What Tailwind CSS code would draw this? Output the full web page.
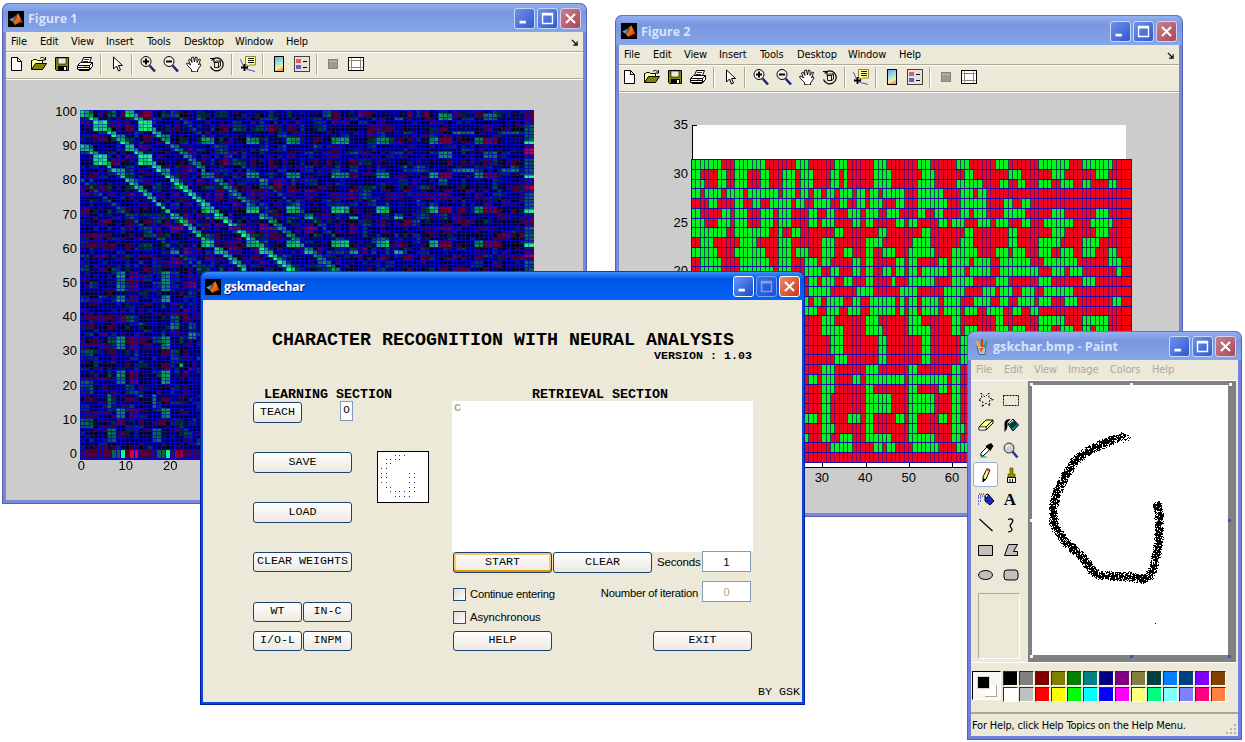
<!DOCTYPE html>
<html lang="en">
<head>
<meta charset="utf-8">
<title>gskmadechar</title>
<script src="https://cdn.jsdelivr.net/npm/@tailwindcss/browser@4"></script>
</head>
<body class="bg-white">
<svg class="absolute size-0">
  <defs>
    <linearGradient id="jet" x1="0" y1="0" x2="0.3" y2="1"><stop offset="0" stop-color="#6fa0e8"/><stop offset=".5" stop-color="#9be0e0"/><stop offset=".8" stop-color="#f4f0a0"/><stop offset="1" stop-color="#f0a060"/></linearGradient>
    <linearGradient id="flame" x1="0" y1="0" x2="1" y2="1"><stop offset="0" stop-color="#ffb060"/><stop offset=".5" stop-color="#f06a20"/><stop offset="1" stop-color="#a02808"/></linearGradient>
  </defs>
  <symbol id="matlab" viewBox="0 0 16 16"><rect width="16" height="16" fill="#000"/><path d="M1 8.5 6 6l2 2-3 3z" fill="#4fa0b0"/><path d="M6 6 10 2 8 9 5 11z" fill="#8a4a38"/><path d="M10 2c2 3 3 7 5 10l-2-1-3 1.5-3 1.5-2-3c3-1 4-5 5-9z" fill="url(#flame)"/></symbol>
  <symbol id="min" viewBox="0 0 21 21"><rect x="5" y="13" width="7" height="3" fill="#fff"/></symbol>
  <symbol id="max" viewBox="0 0 21 21"><path d="M5 5h11v11H5zM5 6.5h11" fill="none" stroke="#fff" stroke-width="1.6"/></symbol>
  <symbol id="cls" viewBox="0 0 21 21"><path d="m5.500 5.500 10 10m0-10-10 10" stroke="#fff" stroke-width="2.2"/></symbol>
</svg>

<main class="relative h-[742px] w-[1245px] overflow-hidden bg-white font-['DejaVu_Sans_Condensed','DejaVu_Sans',sans-serif] text-black">

<template id="figbar">
  <nav class="flex h-[19px] items-center pt-px pl-[5px] text-[11px] tracking-[-0.150px] whitespace-nowrap">
    <span class="w-[29px]">File</span><span class="w-[31px]">Edit</span><span class="w-[35px]">View</span><span class="w-[41px]">Insert</span><span class="w-[37px]">Tools</span><span class="w-[51px]">Desktop</span><span class="w-[51px]">Window</span><span>Help</span>
    <svg class="mr-[5px] ml-auto size-[7px]" viewBox="0 0 8 8"><path d="M1 1l5 5M7 2.500V7H2.500" fill="none" stroke="#000" stroke-width="1.300"/></svg>
  </nav>
  <div class="flex h-[29px] items-center border-t border-b border-t-[#aca899] border-b-white pb-[3px] shadow-[inset_0_1px_0_#fff,inset_0_-1px_0_#aca899]">
    <span class="-ml-[2px] flex w-[23px] justify-center"><svg class="size-4" viewBox="0 0 16 16"><path d="M3.500 1.500h6l4 4v9h-10zM9.500 1.500v4h4" fill="#fff" stroke="#000"/></svg></span>
    <span class="flex w-[23px] justify-center"><svg class="size-4" viewBox="0 0 16 16"><path d="M.5 13.500V4.500h1l1-1h3l1 1h5v3" fill="#ffff9c" stroke="#000"/><path d="M.5 13.500 4.500 7.500h11l-4 6z" fill="#848400" stroke="#000"/><path d="M9 2.500c2-2 4-1 5 1M14.500 1v3h-3" fill="none" stroke="#000"/></svg></span>
    <span class="flex w-[23px] justify-center"><svg class="size-4" viewBox="0 0 16 16"><path d="M1.500 1.500h13v13h-12l-1-1z" fill="#848400" stroke="#000"/><path d="M4 2h8v6H4z" fill="#ece9d8" stroke="#000" stroke-width=".6"/><path d="M4 10h9v5H4z"/><path d="M10 11h2v3h-2z" fill="#fff"/></svg></span>
    <span class="flex w-[23px] justify-center"><svg class="size-4" viewBox="0 0 16 16"><path d="m4.500 6.500 2-5h8l-2 5" fill="#fff" stroke="#000"/><path d="M7 3.500h5M6 5.500h5" stroke="#000" stroke-width=".8"/><path d="M.5 9.500l3-3h12v4l-3 3h-12z" fill="#fff" stroke="#000"/><path d="M1 9.500h11.500v4M12.500 9.500l3-3M1 11.500h11M2 14.500h10l2-2" fill="none" stroke="#000"/><path d="M7 10.500h3" stroke="#bdbd00"/></svg></span>
    <span class="flex w-[9px] justify-center"><i class="h-[21px] w-[2px] border-l border-[#aca899] bg-white"></i></span>
    <span class="flex w-[23px] justify-center"><svg class="size-4" viewBox="0 0 16 16"><path d="M4.500 1v12l3-3 2 5 2-1-2-4.500h4z" fill="#fff" stroke="#000"/></svg></span>
    <span class="flex w-[8px] justify-center"><i class="h-[21px] w-[2px] border-l border-[#aca899] bg-white"></i></span>
    <span class="flex w-[23px] justify-center"><svg class="size-4" viewBox="0 0 16 16"><path d="m9.500 9.500 5.500 6" stroke="#182878" stroke-width="2.500"/><circle cx="6" cy="5.500" r="5" fill="#f4f2ea" stroke="#000"/><path d="M3 5.500h6M6 2.500v6" stroke="#000" stroke-width="2"/></svg></span>
    <span class="flex w-[23px] justify-center"><svg class="size-4" viewBox="0 0 16 16"><path d="m9.500 9.500 5.500 6" stroke="#182878" stroke-width="2.500"/><circle cx="6" cy="5.500" r="5" fill="#f4f2ea" stroke="#000"/><path d="M3 5.500h6" stroke="#000" stroke-width="2"/></svg></span>
    <span class="flex w-[23px] justify-center"><svg class="size-4" viewBox="0 0 16 16"><path d="M5.500 15.500v-2l-4-4-1-2 1.500-.5 2.500 2-2-5 1.500-1 2 3.500L5.500 1.500 7.500 1l1 5 1-5 1.500.500v5l2-3.500 1.500.500-2 5.500 1.500-1.500 1 1.500-3.500 5v2z" fill="#fff" stroke="#000" stroke-width=".9"/></svg></span>
    <span class="flex w-[23px] justify-center"><svg class="size-4" viewBox="0 0 16 16"><path d="M2.500 4.500a6.500 6.500 0 1 1-1 6M1 2.500h4v4" fill="none" stroke="#000" stroke-width="1.200"/><path d="m5.500 6.500 2-1.500h4v5l-2 1.500h-4zM5.500 6.500h4v5m0-5 2-1.500" fill="#ece9d8" stroke="#000" stroke-width=".9"/></svg></span>
    <span class="flex w-[8px] justify-center"><i class="h-[21px] w-[2px] border-l border-[#aca899] bg-white"></i></span>
    <span class="flex w-[23px] justify-center"><svg class="size-4" viewBox="0 0 16 16"><path d="M0 3c2 2 2 5 4 8s7 3 11 4.500" fill="none" stroke="#4a4ac0"/><path d="M5.500.5h10v8.500h-6l-2 2v-2h-2z" fill="#ffff9c" stroke="#8c8430"/><path d="M8 2.500h6M8 4.500h6M8 6.500h6" stroke="#000" stroke-width=".9"/><path d="M1 11.500h7M4.500 8v7" stroke="#000" stroke-width="1.800"/></svg></span>
    <span class="flex w-[8px] justify-center"><i class="h-[21px] w-[2px] border-l border-[#aca899] bg-white"></i></span>
    <span class="flex w-[23px] justify-center"><svg class="size-4" viewBox="0 0 16 16"><rect x="3.500" y=".5" width="9" height="15" fill="url(#jet)" stroke="#000"/></svg></span>
    <span class="flex w-[23px] justify-center"><svg class="size-4" viewBox="0 0 16 16"><rect x=".5" y=".5" width="15" height="15" fill="#e4e0dc" stroke="#484038"/><path d="M2 3h5v4H2z" fill="#d86060"/><path d="M2 9h5v4H2z" fill="#6060c8"/><path d="M9 5.500h4M9 11.500h4" stroke="#000"/></svg></span>
    <span class="flex w-[8px] justify-center"><i class="h-[21px] w-[2px] border-l border-[#aca899] bg-white"></i></span>
    <span class="flex w-[23px] justify-center"><svg class="size-4" viewBox="0 0 16 16"><rect x="3.500" y="3.500" width="9" height="9" fill="#9c9a94" stroke="#87857c"/><path d="M4 5.500h8" stroke="#b8b6ae"/></svg></span>
    <span class="flex w-[23px] justify-center"><svg class="size-4" viewBox="0 0 16 16"><rect x=".5" y="1.500" width="15" height="13" fill="#fff" stroke="#000"/><path d="M1 4.500h14M1 11.500h14M3.500 2v12M12.500 2v12" stroke="#b0ada0"/><rect x="3.500" y="4.500" width="9" height="7" fill="#fff" stroke="#807c70"/></svg></span>
  </div>
</template>

<!-- Figure 1 -->
<section class="absolute top-[3px] left-[2px] flex h-[501px] w-[585px] flex-col rounded-t-[7px] border-r border-b border-l border-[#5560b8] bg-[#7887d8] px-[3px] pb-[3px]">
  <header class="-mx-[3px] flex h-[29px] shrink-0 items-center rounded-t-[7px] border-t border-[#5f74cc] bg-linear-to-b from-[#93b1f0] via-[#7a96df] via-30% to-[#84a6ea] pt-px pr-[5px] pl-[5px]">
    <svg class="size-4"><use href="#matlab"/></svg>
    <h1 class="mt-[2px] ml-1 font-['Open_Sans',sans-serif] text-[12.500px] font-bold text-[#d8e4f8]">Figure 1</h1>
    <div class="ml-auto flex gap-[2px]">
      <svg class="size-[21px] rounded-[3px] border border-[#c8d8f8] bg-linear-to-br from-[#7090e8] to-[#3058d0]"><use href="#min"/></svg>
      <svg class="size-[21px] rounded-[3px] border border-[#c8d8f8] bg-linear-to-br from-[#7090e8] to-[#3058d0]"><use href="#max"/></svg>
      <svg class="size-[21px] rounded-[3px] border border-[#d8d0e8] bg-linear-to-br from-[#c88090] to-[#a84858]"><use href="#cls"/></svg>
    </div>
  </header>
  <div data-bar class="shrink-0 bg-[#ece9d8]"></div>
  <div class="flex-1 bg-[#ccc] pt-[15px] font-['Liberation_Sans',sans-serif] text-[13px]">
    <div class="flex">
      <ul class="w-[71px] text-right leading-[34.200px]">
        <li>100</li><li>90</li><li>80</li><li>70</li><li>60</li><li>50</li><li>40</li><li>30</li><li>20</li><li>10</li><li>0</li>
      </ul>
      <canvas id="weights" width="454" height="350" class="mt-[15px] ml-[3px] h-[350px] w-[454px]"></canvas>
    </div>
    <ul class="-mt-[12px] ml-[53px] flex text-center leading-[14px]">
      <li class="w-[44.500px]">0</li><li class="w-[44.500px]">10</li><li class="w-[44.500px]">20</li><li class="w-[44.500px]">30</li>
    </ul>
  </div>
</section>

<!-- Figure 2 -->
<section class="absolute top-[15px] left-[615px] flex h-[502px] w-[568px] flex-col rounded-t-[7px] border-r border-b border-l border-[#5560b8] bg-[#7887d8] px-[3px] pb-[3px]">
  <header class="-mx-[3px] flex h-[30px] shrink-0 items-center rounded-t-[7px] border-t border-[#5f74cc] bg-linear-to-b from-[#93b1f0] via-[#7a96df] via-30% to-[#84a6ea] pt-px pr-[5px] pl-[5px]">
    <svg class="size-4"><use href="#matlab"/></svg>
    <h1 class="mt-[2px] ml-1 font-['Open_Sans',sans-serif] text-[12.500px] font-bold text-[#d8e4f8]">Figure 2</h1>
    <div class="ml-auto flex gap-[2px]">
      <svg class="size-[21px] rounded-[3px] border border-[#c8d8f8] bg-linear-to-br from-[#7090e8] to-[#3058d0]"><use href="#min"/></svg>
      <svg class="size-[21px] rounded-[3px] border border-[#c8d8f8] bg-linear-to-br from-[#7090e8] to-[#3058d0]"><use href="#max"/></svg>
      <svg class="size-[21px] rounded-[3px] border border-[#d8d0e8] bg-linear-to-br from-[#c88090] to-[#a84858]"><use href="#cls"/></svg>
    </div>
  </header>
  <div data-bar class="shrink-0 bg-[#ece9d8]"></div>
  <div class="flex-1 bg-[#ccc] pt-[8px] font-['Liberation_Sans',sans-serif] text-[13px]">
    <div class="flex">
      <ul class="w-[69px] text-right leading-[48.800px]">
        <li>35</li><li>30</li><li>25</li><li>20</li><li>15</li><li>10</li><li>5</li>
      </ul>
      <canvas id="patterns" width="442" height="344" class="mt-[24px] ml-[3px] h-[344px] w-[442px]"></canvas>
    </div>
    <ul class="mt-[2px] ml-[51px] flex text-center leading-[14px]">
      <li class="w-[43.400px]">0</li><li class="w-[43.400px]">10</li><li class="w-[43.400px]">20</li><li class="w-[43.400px]">30</li><li class="w-[43.400px]">40</li><li class="w-[43.400px]">50</li><li class="w-[43.400px]">60</li><li class="w-[43.400px]">70</li>
    </ul>
  </div>
</section>

<!-- gskmadechar -->
<section class="absolute top-[271px] left-[200px] flex h-[434px] w-[605px] flex-col rounded-t-[7px] border-r border-b border-l border-[#001ea0] bg-[#0a48e0] px-[2px] pb-[2px]">
  <header class="-mx-[2px] flex h-[29px] shrink-0 items-center rounded-t-[7px] border-t border-[#0a40b8] bg-linear-to-b from-[#3a90ff] via-[#0054e3] via-25% to-[#0364fc] pt-px pr-[4px] pl-[4px]">
    <svg class="size-4"><use href="#matlab"/></svg>
    <h1 class="mt-[2px] ml-[3px] font-['Open_Sans',sans-serif] text-[12.500px] font-bold tracking-[-0.300px] text-white [text-shadow:1px_1px_0_#0a1883]">gskmadechar</h1>
    <div class="ml-auto flex gap-[2px]">
      <svg class="size-[21px] rounded-[3px] border border-white bg-linear-to-br from-[#6a98f8] to-[#1848c8]"><use href="#min"/></svg>
      <svg class="size-[21px] rounded-[3px] border border-[#7aa0f0] bg-linear-to-br from-[#3c70e8] to-[#1c50d0]"><use href="#max" opacity=".4"/></svg>
      <svg class="size-[21px] rounded-[3px] border border-white bg-linear-to-br from-[#f08868] to-[#c83410]"><use href="#cls"/></svg>
    </div>
  </header>
  <div class="flex flex-1 flex-col bg-[#ece9d8] font-['Liberation_Mono',monospace]">
    <h2 class="mt-[31px] ml-[69px] text-[18.330px] leading-[20px] font-bold whitespace-nowrap">CHARACTER RECOGNITION WITH NEURAL ANALYSIS</h2>
    <p class="mr-[50px] -mt-px text-right text-[11.670px] leading-[12px] font-bold">VERSION : 1.03</p>
    <div class="mt-[25px] flex">
      <div class="ml-[50px] flex w-[199px] flex-col text-[11.670px]">
        <h3 class="ml-[11px] h-[14px] text-[13.330px] leading-[16px] font-bold">LEARNING SECTION</h3>
        <div class="flex h-[51px] items-start">
          <button class="mt-px h-[21px] w-[49px] rounded-[3px] border border-[#1c4070] bg-linear-to-b from-white to-[#ece9e0]">TEACH</button>
          <span class="ml-[38px] h-[20px] w-[13px] border border-[#7f9db9] bg-white text-center text-[11px] leading-[17px]">O</span>
        </div>
        <div class="flex gap-[25px]">
          <div class="flex flex-col">
            <button class="mb-[29px] h-[21px] w-[99px] rounded-[3px] border border-[#1c4070] bg-linear-to-b from-white to-[#ece9e0]">SAVE</button>
            <button class="mb-[29px] h-[21px] w-[99px] rounded-[3px] border border-[#1c4070] bg-linear-to-b from-white to-[#ece9e0]">LOAD</button>
            <button class="h-[20px] w-[99px] rounded-[3px] border border-[#1c4070] bg-linear-to-b from-white to-[#ece9e0] whitespace-nowrap">CLEAR WEIGHTS</button>
          </div>
          <svg id="thumb" class="-mt-px size-[52px] border border-black bg-white" viewBox="0 0 50 50" shape-rendering="crispEdges"></svg>
        </div>
        <div class="mt-[30px] grid w-[99px] grid-cols-2 gap-x-px gap-y-[9px]">
          <button class="h-[20px] rounded-[3px] border border-[#1c4070] bg-linear-to-b from-white to-[#ece9e0]">WT</button>
          <button class="h-[20px] rounded-[3px] border border-[#1c4070] bg-linear-to-b from-white to-[#ece9e0]">IN-C</button>
          <button class="h-[20px] rounded-[3px] border border-[#1c4070] bg-linear-to-b from-white to-[#ece9e0]">I/O-L</button>
          <button class="h-[20px] rounded-[3px] border border-[#1c4070] bg-linear-to-b from-white to-[#ece9e0]">INPM</button>
        </div>
      </div>
      <div class="flex w-[301px] flex-col text-[11.670px]">
        <h3 class="ml-[80px] h-[14px] text-[13.330px] leading-[16px] font-bold">RETRIEVAL SECTION</h3>
        <div class="h-[151px] bg-white pl-[2px] text-[11.670px] leading-[14px] font-bold text-[#aca899]">C</div>
        <div class="flex pl-px">
          <button class="h-[21px] w-[99px] rounded-[3px] border border-[#1c4070] bg-linear-to-b from-white to-[#ece9e0] shadow-[inset_0_-2px_0_#e59700,inset_0_0_0_2px_#f8c870]">START</button>
          <button class="ml-px h-[21px] w-[99px] rounded-[3px] border border-[#1c4070] bg-linear-to-b from-white to-[#ece9e0]">CLEAR</button>
          <span class="w-[50px] pl-[5px] font-['Liberation_Sans',sans-serif] text-[11.500px] leading-[21px] tracking-[-0.150px]">Seconds</span>
          <span class="-mt-px h-[21px] w-[49px] border border-[#7f9db9] bg-white text-center font-['Liberation_Sans',sans-serif] text-[11.500px] leading-[20px]">1</span>
        </div>
        <div class="mt-[8px] flex justify-between pr-[2px] pl-px font-['Liberation_Sans',sans-serif] text-[11.250px] tracking-[-0.240px]">
          <div class="mt-[7px] flex flex-col gap-[10px]">
            <label class="flex h-[13px] items-center gap-1 leading-[13px]"><i class="size-[13px] border border-[#1c5180] bg-linear-to-br from-[#dcdcd7] to-white"></i>Continue entering</label>
            <label class="flex h-[13px] items-center gap-1 leading-[13px] tracking-[-0.050px]"><i class="size-[13px] border border-[#1c5180] bg-linear-to-br from-[#dcdcd7] to-white"></i>Asynchronous</label>
          </div>
          <div class="flex gap-[4px]">
            <span class="leading-[24px]">Noumber of iteration</span>
            <span class="h-[21px] w-[49px] border border-[#7f9db9] bg-white text-center leading-[20px] text-[#aca899]">0</span>
          </div>
        </div>
        <div class="mt-[7px] flex justify-between pr-px pl-px">
          <button class="h-[20px] w-[99px] rounded-[3px] border border-[#1c4070] bg-linear-to-b from-white to-[#ece9e0]">HELP</button>
          <button class="h-[20px] w-[99px] rounded-[3px] border border-[#1c4070] bg-linear-to-b from-white to-[#ece9e0]">EXIT</button>
        </div>
      </div>
    </div>
    <p class="mt-auto mr-[2px] mb-[3px] text-right text-[11.670px] leading-[14px]">BY GSK</p>
  </div>
</section>

<!-- Paint -->
<section class="absolute top-[331px] left-[967px] flex h-[409px] w-[275px] flex-col rounded-t-[7px] border-r border-b border-l border-[#5560b8] bg-[#7080dc] px-[3px] pb-[3px]">
  <header class="-mx-[3px] flex h-[29px] shrink-0 items-center rounded-t-[7px] border-t border-[#5f74cc] bg-linear-to-b from-[#93b1f0] via-[#7a96df] via-30% to-[#84a6ea] pt-px pr-[5px] pl-[5px]">
    <svg class="size-4" viewBox="0 0 16 16"><path d="M4 7h9l-1 8.500H6z" fill="#b8c8d8" stroke="#506090"/><path d="M5 8 2 1l3 1 3 6z" fill="#f0b030"/><path d="M8 8 8 0h2v8z" fill="#d83820"/><path d="m10 8 3-6 2 1-3 6z" fill="#30a048"/><path d="m6 9 2 5 3-5" fill="#d86830"/></svg>
    <h1 class="mt-[2px] ml-1 font-['Open_Sans',sans-serif] text-[12.500px] font-bold tracking-[0.050px] whitespace-nowrap text-[#d8e4f8]">gskchar.bmp - Paint</h1>
    <div class="ml-auto flex gap-[2px]">
      <svg class="size-[21px] rounded-[3px] border border-[#c8d8f8] bg-linear-to-br from-[#7090e8] to-[#3058d0]"><use href="#min"/></svg>
      <svg class="size-[21px] rounded-[3px] border border-[#c8d8f8] bg-linear-to-br from-[#7090e8] to-[#3058d0]"><use href="#max"/></svg>
      <svg class="size-[21px] rounded-[3px] border border-[#d8d0e8] bg-linear-to-br from-[#c88090] to-[#a84858]"><use href="#cls"/></svg>
    </div>
  </header>
  <nav class="flex h-[20px] shrink-0 items-center bg-[#ece9d8] pl-[5px] text-[11px] tracking-[-0.100px] text-[#aca899]">
    <span class="w-[28px]">File</span><span class="w-[30px]">Edit</span><span class="w-[34px]">View</span><span class="w-[42px]">Image</span><span class="w-[42px]">Colors</span><span>Help</span>
  </nav>
  <div class="flex h-[282px] shrink-0 border-t border-white bg-[#ece9d8]">
    <div class="flex w-[57px] flex-col pt-[6px] pl-[3px]">
      <div class="-ml-px grid w-[50px] grid-cols-2 [&>span]:flex [&>span]:h-[25px] [&>span]:items-center [&>span]:justify-center">
        <span><svg class="size-4" viewBox="0 0 16 16"><path d="m3 1 4 4 4-4v5l4.500 1.500L11 9l1 5-4-3-4 4 1-5-4.500-2L4 6z" fill="none" stroke="#000" stroke-dasharray="2 1.500"/></svg></span>
        <span><svg class="size-4" viewBox="0 0 16 16"><path d="M.5 3.500h15v10H.5z" fill="none" stroke="#000" stroke-dasharray="2 1"/></svg></span>
        <span><svg class="size-4" viewBox="0 0 16 16"><path d="M1 10 8 3h7v3l-7 7H1z" fill="#ffff80" stroke="#000"/><path d="M1 10h7l7-7M8 10v3" fill="none" stroke="#000"/><path d="M1.500 10.500h6v2h-6z" fill="#fff"/></svg></span>
        <span><svg class="size-4" viewBox="0 0 16 16"><path d="m5 7 5-5 5.500 6L10 14z" fill="#0a8f8f" stroke="#000"/><path d="m6 7 6-2.500 2 3-5 4z" fill="#003838"/><path d="m6 6.500 4-3.500" stroke="#fff"/><path d="M1.500 15V7c0-4 3-5 6-5L4.500 5.500V9c0 2-2 5-3 6z" fill="#000"/></svg></span>
        <span><svg class="size-4" viewBox="0 0 16 16"><path d="M1 15.500h9l-4-2z" fill="#00c8c8"/><path d="m9 5-6 6v3h2l6.500-6z" fill="#fff" stroke="#000"/><path d="m7.500 4 5 5 1-2 2-3-2.500-3-3 1.500z"/></svg></span>
        <span><svg class="size-4" viewBox="0 0 16 16"><path d="m9.500 9.500 5 6" stroke="#2038a0" stroke-width="2.500"/><circle cx="6" cy="6" r="5" fill="#d0d0d0" stroke="#303030"/><path d="M3 5.500C4 3.500 6 3.500 7 3.500" fill="none" stroke="#fff"/></svg></span>
        <span class="rounded-[3px] border border-[#98b0d8] bg-white"><svg class="size-4" viewBox="0 0 16 16"><path d="m5 10 4-8.500 3 1.500-4 9-3 3z" fill="#ffff80" stroke="#000"/><path d="m9 1 3 1.500-1 2L8 3z" fill="#d05050"/><path d="m5 11 0 4 3-2.500z"/></svg></span>
        <span><svg class="size-4" viewBox="0 0 16 16"><path d="M7 1h3v6h2v3H5V7h2z" fill="#9a9200" stroke="#504c00" stroke-width=".7"/><path d="M4.500 10.500h8v5h-8z" fill="#fff" stroke="#000"/><path d="M7 12v3M9.500 12v3" stroke="#000"/></svg></span>
        <span><svg class="size-4" viewBox="0 0 16 16"><path d="m7 4 3-2 6 7-4 4-5-4z" fill="#1828b0" stroke="#000040"/><path d="M7 3.500 9.500 2l1 2-2.500 2z" fill="#fff" stroke="#000"/><path d="M1 2h5M0 4h6M0 6h4M0 9h3M0 12h2" stroke="#3840c8" stroke-width="1.500" stroke-dasharray="1 1"/></svg></span>
        <span class="pr-px font-['Liberation_Serif',serif] text-[17px] leading-none font-bold">A</span>
        <span><svg class="size-4" viewBox="0 0 16 16"><path d="m1.500 2 13 12" stroke="#000" stroke-width="1.200"/></svg></span>
        <span><svg class="size-4" viewBox="0 0 16 16"><path d="M5 2.500c5-2 6 1.500 3 4.500s2 4 1 6-3 2-4 2" fill="none" stroke="#000" stroke-width="1.200"/></svg></span>
        <span><svg class="size-4" viewBox="0 0 16 16"><path d="M.5 3.500h14v10H.5z" fill="#c0c0c0" stroke="#000"/></svg></span>
        <span><svg class="size-4" viewBox="0 0 16 16"><path d="M5.500 2.500h9l-4 7h4v4H1.500z" fill="#c0c0c0" stroke="#000"/></svg></span>
        <span><svg class="size-4" viewBox="0 0 16 16"><ellipse cx="7.500" cy="8" rx="7" ry="4.500" fill="#c0c0c0" stroke="#000"/></svg></span>
        <span><svg class="size-4" viewBox="0 0 16 16"><rect x="1" y="3" width="14" height="10" rx="3" fill="#c0c0c0" stroke="#000"/></svg></span>
      </div>
      <div class="mt-[6px] ml-[4px] h-[66px] w-[42px] border border-t-[#aca899] border-r-white border-b-white border-l-[#aca899]"></div>
    </div>
    <div class="relative flex-1 bg-[#808080] pt-[4px] pl-[4px]">
      <canvas id="drawing" width="196" height="270" class="h-[270px] w-[196px] bg-white"></canvas>
      <i class="absolute top-[2px] left-[2px] size-[3px] bg-white"></i>
      <i class="absolute top-[2px] left-[102px] size-[3px] bg-white"></i>
      <i class="absolute top-[2px] left-[201px] size-[3px] bg-white"></i>
      <i class="absolute top-[138px] left-[2px] size-[3px] bg-white"></i>
      <i class="absolute top-[274px] left-[2px] size-[3px] bg-white"></i>
      <i class="absolute top-[138px] left-[200px] size-[3px] bg-[#3858a8]"></i>
      <i class="absolute top-[274px] left-[102px] size-[3px] bg-[#3858a8]"></i>
      <i class="absolute top-[274px] left-[200px] size-[3px] bg-[#3858a8]"></i>
    </div>
    <div class="w-[2px]"></div>
  </div>
  <div class="flex h-[50px] shrink-0 gap-[2px] border-t border-white bg-[#ece9d8] pt-[8px] pl-px">
    <div class="grid size-[29px] border border-t-black border-r-white border-b-white border-l-black bg-[#f8f7f2]">
      <i class="col-start-1 row-start-1 mt-[13px] ml-[12px] size-[12px] border-r border-b border-[#aca899] bg-white"></i>
      <i class="col-start-1 row-start-1 mt-[4px] ml-[4px] size-[13px] border border-[#d8d5c8] bg-black"></i>
    </div>
    <div id="palette" class="grid h-[32px] grid-cols-[repeat(14,16px)] grid-rows-2"></div>
  </div>
  <footer class="flex h-[24px] flex-1 items-center border-t-2 border-[#aca899] bg-[#ece9d8] pt-[3px] pl-px text-[11px] tracking-[-0.190px] whitespace-nowrap">For Help, click Help Topics on the Help Menu.
    <svg class="mt-auto ml-auto size-[13px] shrink-0" viewBox="0 0 13 13" fill="#b8b4a2"><path d="M9 1h2v2H9zM9 5h2v2H9zM9 9h2v2H9zM5 5h2v2H5zM5 9h2v2H5zM1 9h2v2H1z"/></svg>
  </footer>
</section>
</main>

<script>
document.querySelectorAll('[data-bar]').forEach(b => b.append(document.getElementById('figbar').content.cloneNode(true)));

let seed = 7;
const rnd = () => (seed = (seed * 1664525 + 1013904223) >>> 0) / 4294967296;

// Set pixels of each stored pattern, as inclusive column ranges; one string per pattern, top row first.
const runs = [
'0-6 10-16 24-26 33-35 42-44 52-54 61-63 70-72 80-86 90-96',
'0-1 6-7 10-12 16-17 21-23 25-27 32-33 35 42-45 53-55 63-64 73-75 83-85 93-95',
'0-2 6-7 10-12 16-17 21-23 25-27 32-33 35 42-45 52-55 61-66 71-72 75-76 80-82 85-87 90-91 96-97',
'0-1 3-6 8-11 13-19 21-23 25-26 28-29 31-32 34-36 38-39 41-42 44-48 52-57 62-64 66-67',
'4-5 10-11 14-15 18-22 24-25 28-31 34-35 38-39 41-43 47-48 52-58 62-67 72-73 76-77',
'0-1 7-8 10-12 16-18 20-22 27-28 31-32 36-38 40-42 45-47 52-53 56-57 62-63 65-67 72-76 83-85 93-95',
'0-2 6-8 10-12 16-18 20-22 27-28 30-32 37-38 40-41 47-48 50-51 57-58 60-62 66-68 70-72 76-77 81-87 92-96',
'0-7 10-17 20 23-24 33-34 43-44 53-54 63-64 73-74 83-85 93-95',
'2-4 11-14 20-22 30-32 40-43 51-54 62-64 73-74 80-84 90-93',
'0-5 10-16 20-22 24-26 30-32 35-36 40-41 44-46 50-55 60-65 70-72 74-76 80-82 85-87 90-92 96-97',
'2-6 11-17 20-22 26-28 30-31 37-38 40-41 47-48 50-51 57-58 60-63 65-68 71-77 81-88 96-98',
'2-6 11-18 20-22 26-29 32-33 37-38 40-41 44-45 47-48 50-51 53-58 60-62 64-68 71-79 83-85 87-89 98',
'0-5 10-16 20-22 27-28 30-32 35-36 40-41 46 50-55 60-64 70-72 80-82 90-92',
'3-6 11-15 20-22 27-31 38-41 48-51 58-62 67-69 71-73 76-78 81-87',
'0-2 6-8 10-12 16-18 26 28-29 31-34 37-38 41-46 48 50-51 53-56 58-61 65-68 71-72 75-78 80-82 86-88 97-98',
'0-2 7-8 10-12 26-28 31-33 36-38 41-46 48 50-51 53-56 58-61 63-65 68-71 74-75 78-79',
'0-2 10-12 20-22 30-32 40-42 50-52 60-61 70-71 80-85 90-95',
'0-6 10-12 16-18 20-22 30-34 40-43 50-54 60-61 63-65 70-72 74-76 80-82 85-87 90-91 93-95',
'3-5 13-15 23-24 32-34 43-44 53-54 62-64 73-74 83-84 93-95',
'3-5 13-15 23-24 32-34 43-44 53-54 62-64 73-74 83-84 93-95',
'3-5 13-15 24-25 33-35 43-44 53-54 62-64 73-74 83-84',
'0-2 10-12 20-22 30-32 40-42 50-51 60-61 70-71 80-82 90-91',
'0-1 7-8 10-11 17-18 20-21 27-28 30-32 37-38 40-48 50-58 60-61 67-68 70-71 77-78 80-81 87-88',
'3-7 12-17 21-22 30-32 40-41 50-51 57-58 60-61 67-68 72-77 83-86',
'0-7 10-17 20-21 30-31 40-45 50-55 60-61 70-71 80-81 90-91',
'0-7 10-17 20-21 30-31 40-45 50-55 60-61 70-71 80-87 90-97',
'0-5 10-16 20-21 26-28 30-31 36-38 40-41 47-48 50-51 57-58 60-61 66-68 70-76 80-85',
'3-6 11-17 20-22 30-32 40-41 50-51 60-62 71-77 83-86',
'0-6 10-17 20-21 26 30-31 34-36 40-45 50-55 60-61 70-76 80-86',
'3-5 12-15 22-24 32-36 42-43 45-46 51-56 61-63 70-71 77-78',
''
];
const P = runs.map(s => { const a = new Array(102).fill(0); for (const r of s.split(' ')) if (r) { const [x, y = x] = r.split('-').map(Number); for (let i = x; i <= y; i++) a[i] = 1; } return a; });

// Pattern matrix
{
  const c = document.getElementById('patterns').getContext('2d'), cw = 4.34, rh = 9.77;
  c.fillStyle = '#fff'; c.fillRect(1, 0, 434, 343);
  c.fillStyle = '#000'; c.fillRect(1, 0, 1, 343); c.fillRect(1, 0, 5, 1); c.fillRect(1, 342, 434, 1);
  for (let i = 0; i <= 10; i++) c.fillRect(Math.round(1 + i * 43.4), 338, 1, 4);
  const X = i => i >= 101 ? 440 : Math.round(i * cw), Y = i => Math.round(34 + i * rh);
  P.forEach((row, r) => { for (let k = 0; k < 101; k++) {
    c.fillStyle = row[k] ? '#04f420' : (k > 98 ? '#fa0006' : '#f0041c');
    c.fillRect(X(k), Y(r), X(k + 1) - X(k), Y(r + 1) - Y(r));
  } });
  for (let k = 0; k < 100; k++) for (let r = 0; r < 31; r++) { c.fillStyle = P[r][k] || (k && P[r][k - 1]) ? '#04504c' : '#800460'; c.fillRect(X(k), Y(r), 1, Y(r + 1) - Y(r)); }
  c.fillStyle = '#2006a8';
  for (let r = 0; r <= 31; r++) c.fillRect(0, Y(r), 441, 1);
  c.fillRect(0, 34, 1, 303); c.fillRect(440, 34, 1, 304);
}

{
  const c = document.getElementById('weights').getContext('2d'), N = 101;
  const mean = Array.from({length: N}, (_, k) => P.reduce((s, p) => s + p[k], 0) / 31);
  const coarse = Array.from({length: 52}, () => Array.from({length: 52}, () => (rnd() - .5) * .3));
  const V = Array.from({length: N}, (_, r) => Array.from({length: N}, (_, k) => {
    let s = 0; for (const p of P) s += (p[r] - mean[r]) * (p[k] - mean[k]);
    return s / 31 * 1.7 + coarse[r >> 1][k >> 1] + (rnd() - .5) * .12;
  }));
  const add = (x0, x1, y0, y1, v) => { for (let y = y0; y <= y1; y++) for (let x = x0; x <= x1; x++) if (V[y] && x < N) V[y][x] = v * (.8 + rnd() * .35); };
  for (let i = 0; i < N; i++) {
    if (i < 57) { V[i][i] = .85; V[i][i + 1] = Math.max(V[i][i + 1], .45 + rnd() * .2); }
    if (i > 9 && i < 60) { V[i][i - 10] = .7; if (i % 10 < 6) V[i][i - 9] = .5; }
    if (i > 9 && i < 57) { const v = i < 20 ? .72 : .5; V[i - 10][i] = v; if (i % 10 < 7) V[i - 10][i + 1] = v * .75; }
    if (i > 19 && i < 60) { V[i][i - 20] = Math.max(V[i][i - 20], .3); V[i - 20][i] = Math.max(V[i - 20][i], .28); }
  }
  for (const d of [0, 10]) for (const e of [0, 10]) { add(d, d + 1, e, e + 1, .65); add(3 + d, 5 + d, 3 + e, 5 + e, .8); add(8 + d, 9 + d, 7 + e, 8 + e, .5); }
  for (const y of [8, 18, 28, 38]) {
    const v = y > 20 ? .62 : .48;
    for (const x of [27, 37, 46, 56, 57, 66]) add(x, x + 2, y, y + 1, v);
    add(78, 79, y, y + 1, v); add(88, 89, y, y + 1, .45);
    add(80, 82, y, y + 1, -.3); add(90, 92, y, y + 1, -.28);
  }
  for (const y of [31, 41]) for (const x of [20, 30, 40, 50, 60, 70]) add(x, x + 1, y, y, .62);
  for (const x of [20, 33, 40, 50]) add(x, x + 2, 34, 34, -.36);
  for (const y of [1, 12]) { add(80, 82, y, y + 1, .45); add(83, 87, y + 5, y + 5, .42); add(94, 97, y + 5, y + 5, .38); add(90, 92, y, y + 1, .35); }
  for (const [y, h] of [[47, 5], [54, 1], [66, 3], [76, 3], [87, 2]]) { add(8, 9, y, y + h, .45); add(18, 19, y, y + h, .48); add(11, 12, y, y + h, -.25); }
  add(0, 2, 79, 80, .3); add(0, 2, 90, 92, .3); add(6, 6, 83, 86, .4); add(16, 16, 83, 86, .4); add(6, 7, 93, 96, .35); add(16, 17, 93, 96, .35);
  add(24, 25, 65, 66, .45); add(20, 21, 62, 63, .45); add(22, 22, 74, 74, .5);
  for (const y of [36, 39, 60, 68, 78, 88]) add(0, 6, y, y, -.18);
  for (let y = 0; y < 100; y++) add(99, 100, y, y, [9, 19, 29, 39].includes(y) ? .95 : [11, 12, 22, 42].includes(y) ? -.5 : y % 10 > 3 ? .3 : -.2);
  const X = i => i >= 101 ? 454 : Math.round(i * 4.48), Y = i => i >= 100 ? 350 : Math.round(i * 3.42);
  c.fillStyle = '#0606b8'; c.fillRect(0, 0, 454, 350);
  const col = v => {
    if (v > .11) { const t = Math.min(1, v * 1.2); return `rgb(${30 * t | 0},${245 * t | 0},${Math.min(130, 45 + 80 * t) | 0})`; }
    if (v < -.08) { const t = Math.min(1, -v * 1.3 + .1); return `rgb(${240 * t | 0},0,${56})`; }
    return `rgb(0,0,${Math.max(14, Math.min(130, 60 + v * 700)) | 0})`;
  };
  for (let r = 0; r < 99; r++) for (let k = 0; k < N; k++) {
    const w = X(k + 1) - X(k), h = Y(r + 1) - Y(r), v = V[r][k];
    c.fillStyle = col(v);
    if (Math.abs(v) > .2) { c.globalAlpha = Math.min(.6, Math.abs(v) * .8); c.fillRect(X(k), Y(r), w, h); c.globalAlpha = 1; }
    c.fillRect(X(k) + 1, Y(r) + 1, w - 1, h - 1);
  }
  for (let k = 0; k < N; k++) {
    const m = k % 10, g = k === 9 || k === 19 ? .95 : m === 8 || m === 7 ? .32 : k === 11 || k === 12 ? -.65 : k === 21 || k === 22 ? -.4 : -.18;
    c.fillStyle = col(g); c.fillRect(X(k) + 1, 340, X(k + 1) - X(k) - 1, 8);
  }
}

// Quantised drawing thumbnail
{
  const pts = {4: [17, 21, 26], 8: [8, 12, 17, 21], 12: [8, 12], 17: [3, 8], 22: [3, 8, 31, 36], 26: [3, 8, 31, 36], 31: [3, 8, 31, 36], 36: [8, 12, 31, 36], 40: [12, 17, 21, 26, 31, 36], 45: [17, 21, 26, 31]};
  let s = '';
  for (const y in pts) for (const x of pts[y]) s += `<rect x="${x}" y="${y - 1}" width="1" height="1" fill="#2828a0"/>`;
  document.getElementById('thumb').innerHTML = s;
}

// Airbrush stroke
{
  const c = document.getElementById('drawing').getContext('2d');
  const pts = [[1120,436.7],[1105,442.3],[1088,450],[1075,460],[1065,475],[1056.7,491.7],[1052.5,508],[1053.5,525],[1065,541.7],[1080,555],[1087,563],[1092,571],[1100,575],[1112,576],[1128,576],[1140,579],[1148,577],[1153,568],[1157,550],[1159,530],[1159,518],[1157.3,505]].map(p => [p[0] - 1032, p[1] - 385]);
  c.fillStyle = '#000';
  const blob = (x, y, n) => { for (let i = 0; i < n; i++) { const a = rnd() * 6.283, d = Math.pow(rnd(), .7) * 4.7; c.fillRect(Math.round(x + Math.cos(a) * d), Math.round(y + Math.sin(a) * d), 1, 1); } };
  for (let i = 1; i < pts.length; i++) { const [a, b] = pts[i - 1], [x, y] = pts[i], L = Math.hypot(x - a, y - b); for (let t = 0; t < L; t += 1) blob(a + (x - a) * t / L, b + (y - b) * t / L, 12); }
  blob(90, 52, 40); blob(96, 52, 14); blob(125, 120, 60); blob(110, 193, 70);
  c.fillRect(123, 238, 1, 1);
}

// Colour palette
document.getElementById('palette').innerHTML = ['#000000','#808080','#800000','#808000','#008000','#008080','#000080','#800080','#808040','#004040','#0080ff','#004080','#8000ff','#804000','#ffffff','#c0c0c0','#ff0000','#ffff00','#00ff00','#00ffff','#0000ff','#ff00ff','#ffff80','#00ff80','#80ffff','#8080ff','#ff0080','#ff8040'].map(k => `<i class="size-[15px] border border-t-[#303028] border-r-white border-b-white border-l-[#303028]" style="background:${k}"></i>`).join('');
</script>
</body>
</html>
